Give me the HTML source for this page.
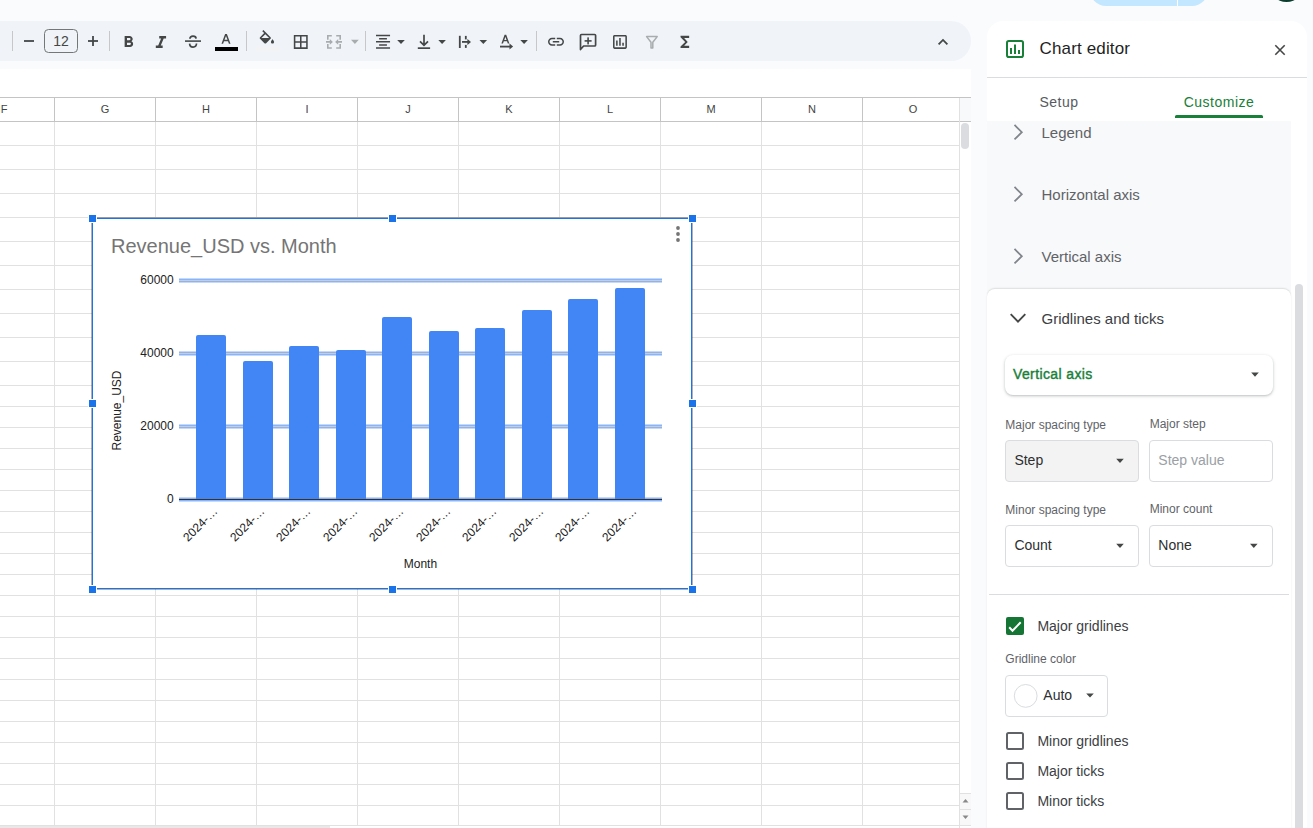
<!DOCTYPE html>
<html><head><meta charset="utf-8">
<style>
*{box-sizing:border-box;margin:0;padding:0}
html,body{width:1313px;height:828px;overflow:hidden;background:#f9fbfd;font-family:"Liberation Sans",sans-serif;position:relative}
.abs{position:absolute}
.colh{position:absolute;top:98px;height:23px;line-height:23px;font-size:11px;color:#444;text-align:center;width:100px}
</style></head>
<body>
<div class="abs" style="left:1090px;top:-30px;width:118px;height:36px;background:#c2e7ff;border-radius:16px"></div>
<div class="abs" style="left:1177px;top:0;width:1px;height:6px;background:#fff"></div>
<div class="abs" style="left:1269px;top:-32px;width:35px;height:34px;background:#0b3d2e;border-radius:50%"></div>
<div class="abs" style="left:-60px;top:21px;width:1031px;height:40px;background:#f0f3f8;border-radius:20px"></div>
<div class="abs" style="left:0;top:69px;width:971px;height:759px;background:#fff"></div>

<svg class="abs" style="left:0;top:0" width="980" height="70" fill="#444746">
<rect x="12" y="31" width="1" height="20" fill="#c7c7c7"/>
<rect x="109" y="31" width="1" height="20" fill="#c7c7c7"/>
<rect x="246" y="31" width="1" height="20" fill="#c7c7c7"/>
<rect x="365" y="31" width="1" height="20" fill="#c7c7c7"/>
<rect x="536" y="31" width="1" height="20" fill="#c7c7c7"/>
<rect x="24" y="40.1" width="10" height="1.8"/>
<rect x="44.5" y="29.5" width="33" height="23" rx="4" fill="none" stroke="#747775" stroke-width="1"/>
<text x="61" y="46.2" font-size="14" text-anchor="middle" font-family="Liberation Sans">12</text>
<rect x="88" y="40.1" width="10" height="1.8"/><rect x="92.1" y="36" width="1.8" height="10"/>
<path transform="translate(119.1 32.8) scale(0.79)" d="M15.6 10.79c.97-.67 1.65-1.77 1.65-2.79 0-2.26-1.75-4-4-4H7v14h7.04c2.09 0 3.71-1.7 3.71-3.79 0-1.52-.86-2.82-2.15-3.42zM10 6.5h3c.83 0 1.5.67 1.5 1.5s-.67 1.5-1.5 1.5h-3v-3zm3.5 9H10v-3h3.5c.83 0 1.5.67 1.5 1.5s-.67 1.5-1.5 1.5z"/>
<path transform="translate(150.66 32.57) scale(0.857)" d="M10 4v3h2.21l-3.42 8H6v3h8v-3h-2.21l3.42-8H18V4z"/>
<rect x="185" y="40.3" width="16" height="1.6"/>
<path d="M189.9 38.8 C190.1 35.2 195.9 35.2 196.1 38.6" fill="none" stroke="#444746" stroke-width="1.7"/>
<path d="M189.6 43.6 C189.8 48.2 196.4 48.2 196.5 43.6" fill="none" stroke="#444746" stroke-width="1.7"/>
<path fill-rule="evenodd" d="M221.5 43.7 L225.1 34 L226.9 34 L230.5 43.7 L228.9 43.7 L228 41.2 L224 41.2 L223.1 43.7 Z M224.5 39.8 L227.5 39.8 L226 35.9 Z"/>
<rect x="215" y="47" width="23" height="4" fill="#000"/>
<path transform="translate(257.3 30) scale(0.8)" d="M16.56 8.94L7.62 0 6.21 1.41l2.38 2.38-5.15 5.15c-.59.59-.59 1.54 0 2.12l5.5 5.5c.29.29.68.44 1.06.44s.77-.15 1.06-.44l5.5-5.5c.59-.58.59-1.53 0-2.12zM5.21 10L10 5.21 14.79 10H5.21zM19 11.5s-2 2.17-2 3.5c0 1.1.9 2 2 2s2-.9 2-2c0-1.33-2-3.5-2-3.5z"/>
<rect x="256" y="47" width="23" height="4" fill="#f3f3f3"/>
<path transform="translate(291.5 32.7) scale(0.772)" d="M3 3v18h18V3H3zm8 16H5v-6h6v6zm0-8H5V5h6v6zm8 8h-6v-6h6v6zm0-8h-6V5h6v6z"/>
<g fill="none" stroke="#a9acae" stroke-width="1.6"><path d="M331.8 35.8 H327.8 V39.7 M327.8 44.1 V48 H331.8 M336.2 35.8 H340.2 V39.7 M340.2 44.1 V48 H336.2 M326 41.9 H331 M342 41.9 H337"/></g>
<path d="M329.8 39 L332.9 41.9 L329.8 44.8 Z M338.2 39 L335.1 41.9 L338.2 44.8 Z" fill="#a9acae"/>
<path d="M351 39.8 H358.8 L354.9 43.9 Z" fill="#a9acae"/>
<path transform="translate(373.66 32.46) scale(0.78)" d="M7 15v2h10v-2H7zm-4 6h18v-2H3v2zm0-8h18v-2H3v2zm4-6v2h10V7H7zM3 3v2h18V3H3z"/>
<path d="M397.2 39.9 H404.8 L401.0 44 Z"/>
<path d="M438.3 39.9 H445.90000000000003 L442.1 44 Z"/>
<path d="M479.5 39.9 H487.1 L483.3 44 Z"/>
<path d="M520.3 39.9 H527.9 L524.0999999999999 44 Z"/>
<g fill="none" stroke="#444746" stroke-width="1.7"><path d="M424 34.8 V45.2 M420 41.4 L424 45.4 L428 41.4"/></g>
<rect x="417.8" y="47.3" width="12.3" height="1.7"/>
<rect x="458.9" y="35.8" width="1.8" height="12.2"/>
<rect x="464.9" y="35.9" width="1.8" height="3.5"/><rect x="464.9" y="44.9" width="1.8" height="3"/>
<rect x="462" y="41" width="6.5" height="1.8"/><path d="M467.4 38.9 L471 41.9 L467.4 44.9 Z"/>
<path fill-rule="evenodd" d="M501.4 43.6 L504.6 34.8 L506.2 34.8 L509.4 43.6 L507.8 43.6 L507 41.3 L503.8 41.3 L503 43.6 Z M504.3 39.9 L506.5 39.9 L505.4 36.7 Z"/>
<rect x="500" y="45.7" width="10.5" height="1.8"/><path d="M509.5 43.6 L513.1 46.6 L509.5 49.6 Z"/>
<path transform="translate(546.4 32.2) scale(0.8)" d="M3.9 12c0-1.71 1.39-3.1 3.1-3.1h4V7H7c-2.76 0-5 2.24-5 5s2.24 5 5 5h4v-1.9H7c-1.71 0-3.1-1.39-3.1-3.1zM8 13h8v-2H8v2zm9-6h-4v1.9h4c1.71 0 3.1 1.39 3.1 3.1s-1.39 3.1-3.1 3.1h-4V17h4c2.76 0 5-2.24 5-5s-2.24-5-5-5z"/>
<path d="M580.5 49.5 V35.5 Q580.5 34.5 581.5 34.5 H594.6 Q595.6 34.5 595.6 35.5 V45 Q595.6 46 594.6 46 H583.6 Z" fill="none" stroke="#444746" stroke-width="1.7" stroke-linejoin="round"/>
<rect x="584.6" y="40.1" width="7" height="1.6"/><rect x="587.3" y="37.4" width="1.6" height="7"/>
<path transform="translate(610.7 32.7) scale(0.772)" d="M19 3H5c-1.1 0-2 .9-2 2v14c0 1.1.9 2 2 2h14c1.1 0 2-.9 2-2V5c0-1.1-.9-2-2-2zm0 16H5V5h14v14zM7 10h2v7H7zm4-3h2v10h-2zm4 6h2v4h-2z"/>
<path d="M646.6 36.6 H657.2 L652.8 42.2 V48 H651 V42.2 Z" fill="none" stroke="#a9acae" stroke-width="1.5" stroke-linejoin="round"/>
<path transform="translate(676.2 32.8) scale(0.72 0.76)" d="M18 4H6v2l6.5 6L6 18v2h12v-3h-7l5-5-5-5h7z"/>
<path d="M938.6 44.3 L943 39.9 L947.4 44.3" fill="none" stroke="#444746" stroke-width="1.8"/>
</svg>
<svg class="abs" style="left:0;top:0" width="971" height="828" shape-rendering="crispEdges">
<rect x="960" y="98" width="11" height="23" fill="#f8f9fa"/>
<rect x="0" y="97" width="971" height="1" fill="#c4c4c4"/>
<rect x="0" y="121" width="971" height="1" fill="#c4c4c4"/>
<rect x="54" y="98" width="1" height="23" fill="#c4c4c4"/>
<rect x="54" y="122" width="1" height="704" fill="#e1e1e1"/>
<rect x="155" y="98" width="1" height="23" fill="#c4c4c4"/>
<rect x="155" y="122" width="1" height="704" fill="#e1e1e1"/>
<rect x="256" y="98" width="1" height="23" fill="#c4c4c4"/>
<rect x="256" y="122" width="1" height="704" fill="#e1e1e1"/>
<rect x="357" y="98" width="1" height="23" fill="#c4c4c4"/>
<rect x="357" y="122" width="1" height="704" fill="#e1e1e1"/>
<rect x="458" y="98" width="1" height="23" fill="#c4c4c4"/>
<rect x="458" y="122" width="1" height="704" fill="#e1e1e1"/>
<rect x="559" y="98" width="1" height="23" fill="#c4c4c4"/>
<rect x="559" y="122" width="1" height="704" fill="#e1e1e1"/>
<rect x="660" y="98" width="1" height="23" fill="#c4c4c4"/>
<rect x="660" y="122" width="1" height="704" fill="#e1e1e1"/>
<rect x="761" y="98" width="1" height="23" fill="#c4c4c4"/>
<rect x="761" y="122" width="1" height="704" fill="#e1e1e1"/>
<rect x="862" y="98" width="1" height="23" fill="#c4c4c4"/>
<rect x="862" y="122" width="1" height="704" fill="#e1e1e1"/>
<rect x="959" y="98" width="1" height="730" fill="#e1e1e1"/>
<rect x="0" y="145" width="959" height="1" fill="#e1e1e1"/>
<rect x="0" y="169" width="959" height="1" fill="#e1e1e1"/>
<rect x="0" y="193" width="959" height="1" fill="#e1e1e1"/>
<rect x="0" y="217" width="959" height="1" fill="#e1e1e1"/>
<rect x="0" y="241" width="959" height="1" fill="#e1e1e1"/>
<rect x="0" y="265" width="959" height="1" fill="#e1e1e1"/>
<rect x="0" y="289" width="959" height="1" fill="#e1e1e1"/>
<rect x="0" y="313" width="959" height="1" fill="#e1e1e1"/>
<rect x="0" y="337" width="959" height="1" fill="#e1e1e1"/>
<rect x="0" y="361" width="959" height="1" fill="#e1e1e1"/>
<rect x="0" y="385" width="959" height="1" fill="#e1e1e1"/>
<rect x="0" y="406" width="959" height="1" fill="#e1e1e1"/>
<rect x="0" y="427" width="959" height="1" fill="#e1e1e1"/>
<rect x="0" y="448" width="959" height="1" fill="#e1e1e1"/>
<rect x="0" y="469" width="959" height="1" fill="#e1e1e1"/>
<rect x="0" y="490" width="959" height="1" fill="#e1e1e1"/>
<rect x="0" y="511" width="959" height="1" fill="#e1e1e1"/>
<rect x="0" y="532" width="959" height="1" fill="#e1e1e1"/>
<rect x="0" y="553" width="959" height="1" fill="#e1e1e1"/>
<rect x="0" y="574" width="959" height="1" fill="#e1e1e1"/>
<rect x="0" y="595" width="959" height="1" fill="#e1e1e1"/>
<rect x="0" y="616" width="959" height="1" fill="#e1e1e1"/>
<rect x="0" y="637" width="959" height="1" fill="#e1e1e1"/>
<rect x="0" y="658" width="959" height="1" fill="#e1e1e1"/>
<rect x="0" y="679" width="959" height="1" fill="#e1e1e1"/>
<rect x="0" y="700" width="959" height="1" fill="#e1e1e1"/>
<rect x="0" y="721" width="959" height="1" fill="#e1e1e1"/>
<rect x="0" y="742" width="959" height="1" fill="#e1e1e1"/>
<rect x="0" y="763" width="959" height="1" fill="#e1e1e1"/>
<rect x="0" y="784" width="959" height="1" fill="#e1e1e1"/>
<rect x="0" y="805" width="959" height="1" fill="#e1e1e1"/>
<rect x="0" y="825" width="971" height="1" fill="#e1e1e1"/>
<rect x="961" y="123" width="8" height="26" rx="4" fill="#dadce0" shape-rendering="auto"/>
<rect x="960" y="794" width="11" height="31" fill="#f8f8f8"/>
<rect x="960" y="793" width="11" height="1" fill="#e1e1e1"/>
<rect x="960" y="809" width="11" height="1" fill="#e1e1e1"/>
<path d="M962.5 802.5 L965.5 799 L968.5 802.5 Z" fill="#888" shape-rendering="auto"/>
<path d="M962.5 815.5 L965.5 819 L968.5 815.5 Z" fill="#888" shape-rendering="auto"/>
<rect x="0" y="826" width="330" height="2" fill="#e8e8e8"/>
</svg>
<div class="colh" style="left:55px">G</div>
<div class="colh" style="left:156px">H</div>
<div class="colh" style="left:257px">I</div>
<div class="colh" style="left:358px">J</div>
<div class="colh" style="left:459px">K</div>
<div class="colh" style="left:560px">L</div>
<div class="colh" style="left:661px">M</div>
<div class="colh" style="left:762px">N</div>
<div class="colh" style="left:863px">O</div>
<div class="colh" style="left:-46px">F</div>
<svg class="abs" style="left:0;top:0" width="720" height="600" font-family="Liberation Sans">
<rect x="92" y="218" width="600" height="371" fill="#fff"/>
<text x="111" y="252.7" font-size="20" fill="#757575">Revenue_USD vs. Month</text>
<circle cx="678" cy="228" r="1.9" fill="#757575"/>
<circle cx="678" cy="234" r="1.9" fill="#757575"/>
<circle cx="678" cy="240" r="1.9" fill="#757575"/>
<rect x="179" y="278.5" width="483" height="4" fill="#8ab4f8"/>
<rect x="179" y="280.0" width="483" height="1" fill="#cccccc"/>
<rect x="179" y="351.5" width="483" height="4" fill="#8ab4f8"/>
<rect x="179" y="353.0" width="483" height="1" fill="#cccccc"/>
<rect x="179" y="424.5" width="483" height="4" fill="#8ab4f8"/>
<rect x="179" y="426.0" width="483" height="1" fill="#cccccc"/>
<rect x="179" y="497.5" width="483" height="4" fill="#8ab4f8"/>
<rect x="179" y="499.0" width="483" height="1" fill="#333333"/>
<text x="173.7" y="283.8" font-size="12" fill="#222" text-anchor="end">60000</text>
<text x="173.7" y="356.8" font-size="12" fill="#222" text-anchor="end">40000</text>
<text x="173.7" y="429.8" font-size="12" fill="#222" text-anchor="end">20000</text>
<text x="173.7" y="502.8" font-size="12" fill="#222" text-anchor="end">0</text>
<path d="M196 499 V337 Q196 335 198 335 H224 Q226 335 226 337 V499 Z" fill="#4285f4"/>
<path d="M243 499 V363 Q243 361 245 361 H271 Q273 361 273 363 V499 Z" fill="#4285f4"/>
<path d="M289 499 V348 Q289 346 291 346 H317 Q319 346 319 348 V499 Z" fill="#4285f4"/>
<path d="M336 499 V352 Q336 350 338 350 H364 Q366 350 366 352 V499 Z" fill="#4285f4"/>
<path d="M382 499 V319 Q382 317 384 317 H410 Q412 317 412 319 V499 Z" fill="#4285f4"/>
<path d="M429 499 V333 Q429 331 431 331 H457 Q459 331 459 333 V499 Z" fill="#4285f4"/>
<path d="M475 499 V330 Q475 328 477 328 H503 Q505 328 505 330 V499 Z" fill="#4285f4"/>
<path d="M522 499 V312 Q522 310 524 310 H550 Q552 310 552 312 V499 Z" fill="#4285f4"/>
<path d="M568 499 V301 Q568 299 570 299 H596 Q598 299 598 301 V499 Z" fill="#4285f4"/>
<path d="M615 499 V290 Q615 288 617 288 H643 Q645 288 645 290 V499 Z" fill="#4285f4"/>
<rect x="179" y="499" width="483" height="1" fill="#333333"/>
<text x="218.3" y="512" font-size="12" fill="#222" text-anchor="end" transform="rotate(-45 218.3 512)">2024-…</text>
<text x="265.3" y="512" font-size="12" fill="#222" text-anchor="end" transform="rotate(-45 265.3 512)">2024-…</text>
<text x="311.3" y="512" font-size="12" fill="#222" text-anchor="end" transform="rotate(-45 311.3 512)">2024-…</text>
<text x="358.3" y="512" font-size="12" fill="#222" text-anchor="end" transform="rotate(-45 358.3 512)">2024-…</text>
<text x="404.3" y="512" font-size="12" fill="#222" text-anchor="end" transform="rotate(-45 404.3 512)">2024-…</text>
<text x="451.3" y="512" font-size="12" fill="#222" text-anchor="end" transform="rotate(-45 451.3 512)">2024-…</text>
<text x="497.3" y="512" font-size="12" fill="#222" text-anchor="end" transform="rotate(-45 497.3 512)">2024-…</text>
<text x="544.3" y="512" font-size="12" fill="#222" text-anchor="end" transform="rotate(-45 544.3 512)">2024-…</text>
<text x="590.3" y="512" font-size="12" fill="#222" text-anchor="end" transform="rotate(-45 590.3 512)">2024-…</text>
<text x="637.3" y="512" font-size="12" fill="#222" text-anchor="end" transform="rotate(-45 637.3 512)">2024-…</text>
<text x="420.4" y="568.3" font-size="12" fill="#222" text-anchor="middle">Month</text>
<text x="120.5" y="410.5" font-size="12" fill="#222" text-anchor="middle" transform="rotate(-90 120.5 410.5)">Revenue_USD</text>
<g shape-rendering="crispEdges">
<rect x="91" y="217" width="602" height="1" fill="#000" opacity="0.3"/>
<rect x="91" y="217" width="1" height="373" fill="#000" opacity="0.3"/>
<rect x="692" y="218" width="1" height="372" fill="#000" opacity="0.3"/>
<rect x="91" y="589" width="602" height="1" fill="#000" opacity="0.3"/>
<rect x="92" y="218" width="600" height="1" fill="#1a73e8"/>
<rect x="92" y="218" width="1" height="371" fill="#1a73e8"/>
<rect x="691" y="218" width="1" height="371" fill="#1a73e8"/>
<rect x="92" y="588" width="600" height="1" fill="#1a73e8"/>
<rect x="88" y="214" width="9" height="9" fill="#fff"/>
<rect x="89" y="215" width="7" height="7" fill="#1a73e8"/>
<rect x="88" y="399" width="9" height="9" fill="#fff"/>
<rect x="89" y="400" width="7" height="7" fill="#1a73e8"/>
<rect x="88" y="585" width="9" height="9" fill="#fff"/>
<rect x="89" y="586" width="7" height="7" fill="#1a73e8"/>
<rect x="388" y="214" width="9" height="9" fill="#fff"/>
<rect x="389" y="215" width="7" height="7" fill="#1a73e8"/>
<rect x="388" y="585" width="9" height="9" fill="#fff"/>
<rect x="389" y="586" width="7" height="7" fill="#1a73e8"/>
<rect x="688" y="214" width="9" height="9" fill="#fff"/>
<rect x="689" y="215" width="7" height="7" fill="#1a73e8"/>
<rect x="688" y="399" width="9" height="9" fill="#fff"/>
<rect x="689" y="400" width="7" height="7" fill="#1a73e8"/>
<rect x="688" y="585" width="9" height="9" fill="#fff"/>
<rect x="689" y="586" width="7" height="7" fill="#1a73e8"/>
</g>
</svg>
<div class="abs" style="left:987px;top:21px;width:320px;height:820px;background:#fff;border-radius:16px 16px 0 0;overflow:hidden"></div>
<div class="abs" style="left:987px;top:121px;width:304px;height:180px;background:#f8f9fa"></div>
<div class="abs" style="left:987px;top:289px;width:304px;height:560px;background:#fff;border-radius:8px 8px 0 0;box-shadow:0 -0.5px 1.5px rgba(60,64,67,0.15)"></div>
<svg class="abs" style="left:0;top:0" width="1313" height="828" font-family="Liberation Sans">
<rect x="1007" y="41" width="16" height="16" rx="1.8" fill="none" stroke="#188038" stroke-width="2"/>
<rect x="1010" y="48" width="2" height="6" fill="#188038"/><rect x="1014" y="44.5" width="2" height="9.5" fill="#188038"/><rect x="1018" y="50" width="2" height="4" fill="#188038"/>
<text x="1039.5" y="54.1" font-size="17" letter-spacing="0.15" fill="#1f1f1f">Chart editor</text>
<path d="M1275.3 45.3 L1284.7 54.7 M1284.7 45.3 L1275.3 54.7" stroke="#444746" stroke-width="1.6"/>
<rect x="987" y="77" width="320" height="1" fill="#dadce0"/>
<text x="1039.4" y="107" font-size="14" letter-spacing="0.5" fill="#575b5f">Setup</text>
<text x="1183.7" y="107" font-size="14" letter-spacing="0.5" fill="#188038">Customize</text>
<path d="M1175 118 V116.5 Q1175 115 1176.5 115 H1261.5 Q1263 115 1263 116.5 V118 Z" fill="#188038"/>
<path d="M1014.5 124.9 L1021.8 132.20000000000002 L1014.5 139.4" fill="none" stroke="#80868b" stroke-width="1.8"/>
<text x="1041.5" y="138" font-size="15" fill="#5f6368">Legend</text>
<path d="M1014.5 186.9 L1021.8 194.20000000000002 L1014.5 201.4" fill="none" stroke="#80868b" stroke-width="1.8"/>
<text x="1041.5" y="200" font-size="15" fill="#5f6368">Horizontal axis</text>
<path d="M1014.5 248.9 L1021.8 256.2 L1014.5 263.4" fill="none" stroke="#80868b" stroke-width="1.8"/>
<text x="1041.5" y="262" font-size="15" fill="#5f6368">Vertical axis</text>
<path d="M1010.7 314.2 L1018 321.6 L1025.3 314.2" fill="none" stroke="#444746" stroke-width="1.9"/>
<text x="1041.5" y="323.7" font-size="15" fill="#3c4043">Gridlines and ticks</text>
</svg>
<div class="abs" style="left:1005px;top:355px;width:268px;height:40px;background:#fff;border-radius:8px;box-shadow:0 1px 2px rgba(60,64,67,0.22),0 1px 3px 1px rgba(60,64,67,0.1)"></div>
<div class="abs" style="left:1005px;top:440px;width:134px;height:42px;background:#f3f3f3;border:1px solid #dadce0;border-radius:4px"></div>
<div class="abs" style="left:1149px;top:440px;width:124px;height:42px;background:#fff;border:1px solid #dadce0;border-radius:4px"></div>
<div class="abs" style="left:1005px;top:525px;width:134px;height:42px;background:#fff;border:1px solid #dadce0;border-radius:4px"></div>
<div class="abs" style="left:1149px;top:525px;width:124px;height:42px;background:#fff;border:1px solid #dadce0;border-radius:4px"></div>
<div class="abs" style="left:1005px;top:675px;width:103px;height:42px;background:#fff;border:1px solid #dadce0;border-radius:4px"></div>
<svg class="abs" style="left:0;top:0" width="1313" height="828" font-family="Liberation Sans">
<text x="1013" y="378.9" font-size="14" fill="#188038" stroke="#188038" stroke-width="0.4" letter-spacing="0.38">Vertical axis</text>
<path d="M1251.2 372.6 H1258.8 L1255.0 376.8 Z" fill="#444746"/>
<text x="1005.3" y="428.9" font-size="12" fill="#5f6368">Major spacing type</text>
<text x="1149.7" y="427.8" font-size="12" fill="#5f6368">Major step</text>
<text x="1014.4" y="465.2" font-size="14" fill="#2d2f31">Step</text>
<path d="M1116.2 458.8 H1123.8 L1120.0 463.0 Z" fill="#444746"/>
<text x="1158.3" y="464.9" font-size="14" fill="#9aa0a6">Step value</text>
<text x="1005.3" y="513.9" font-size="12" fill="#5f6368">Minor spacing type</text>
<text x="1149.7" y="512.8" font-size="12" fill="#5f6368">Minor count</text>
<text x="1014.4" y="550.2" font-size="14" fill="#2d2f31">Count</text>
<path d="M1116.2 543.8 H1123.8 L1120.0 548.0 Z" fill="#444746"/>
<text x="1158.3" y="550.2" font-size="14" fill="#2d2f31">None</text>
<path d="M1250 543.8 H1257.6 L1253.8 548.0 Z" fill="#444746"/>
<rect x="989" y="594" width="300" height="1" fill="#dadce0"/>
<rect x="1006" y="617" width="18" height="18" rx="2" fill="#157534"/>
<path d="M1009.2 627.3 L1012.5 630.7 L1020.7 622.3" fill="none" stroke="#fff" stroke-width="2"/>
<text x="1037.4" y="630.7" font-size="14" fill="#3c4043">Major gridlines</text>
<text x="1005.3" y="662.9" font-size="12" fill="#5f6368">Gridline color</text>
<circle cx="1025.7" cy="695.9" r="11.4" fill="#fff" stroke="#dadce0" stroke-width="1"/>
<text x="1043.3" y="699.7" font-size="14" fill="#2d2f31">Auto</text>
<path d="M1086.2 693.4 H1093.8 L1090.0 697.6 Z" fill="#444746"/>
<rect x="1007" y="733" width="16" height="16" rx="1.5" fill="none" stroke="#5f6368" stroke-width="2"/>
<text x="1037.4" y="746.1" font-size="14" fill="#3c4043">Minor gridlines</text>
<rect x="1007" y="763" width="16" height="16" rx="1.5" fill="none" stroke="#5f6368" stroke-width="2"/>
<text x="1037.4" y="776.1" font-size="14" fill="#3c4043">Major ticks</text>
<rect x="1007" y="793" width="16" height="16" rx="1.5" fill="none" stroke="#5f6368" stroke-width="2"/>
<text x="1037.4" y="806.1" font-size="14" fill="#3c4043">Minor ticks</text>
<rect x="1295" y="284" width="8" height="600" rx="4" fill="#dadce0"/>
</svg>
</body></html>
